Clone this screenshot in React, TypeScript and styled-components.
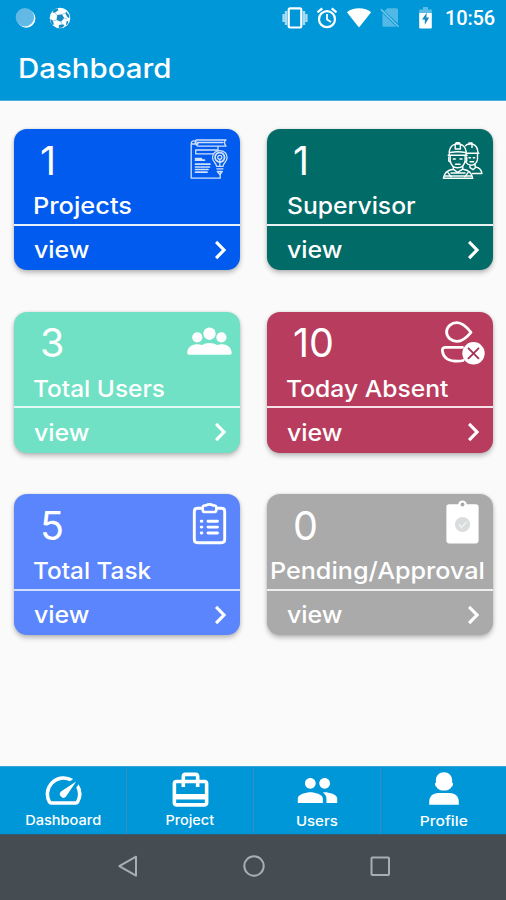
import React from "react";
import styled, { createGlobalStyle } from "styled-components";
import { MdOutlineSpeed, MdCardTravel, MdPeople } from "react-icons/md";

const GlobalStyle = createGlobalStyle`
  *, *::before, *::after { box-sizing: border-box; }
  body { margin: 0; background: #fafafa; font-family: Inter, "Liberation Sans", sans-serif; }
`;

const Screen = styled.div`
  width: 506px;
  height: 900px;
  display: flex;
  flex-direction: column;
  background: #fafafa;
  color: #fff;
  overflow: hidden;
  svg { display: block; flex: none; }
`;

const Header = styled.header`
  height: 101px;
  flex: none;
  background: #0097d9;
  border-bottom: 1px solid #48add9;
`;

const StatusBar = styled.div`
  height: 36px;
  display: flex;
  justify-content: space-between;
  padding: 0 11px 0 15px;
`;

const StatusGroup = styled.div<{ $gap: number }>`
  display: flex;
  align-items: center;
  gap: ${(p) => p.$gap}px;
`;

const Clock = styled.span`
  margin-left: 4px;
  font: 500 20px/36px Roboto, sans-serif;
  letter-spacing: -0.15px;
`;

const Stretch = styled.span<{ $x?: number }>`
  display: inline-block;
  white-space: nowrap;
  transform: scaleX(${(p) => p.$x ?? 1});
  transform-origin: 0 50%;
`;

const Title = styled.h1`
  margin: 0;
  padding-left: 17.5px;
  font-size: 27px;
  font-weight: 450;
  line-height: 66px;
`;

const Main = styled.main`
  flex: 1;
  display: grid;
  grid-template-columns: 226px 226px;
  grid-auto-rows: 141px;
  column-gap: 27px;
  row-gap: 41.5px;
  padding: 28px 13px 0 14px;
`;

const Card = styled.section<{ $bg: string }>`
  display: flex;
  flex-direction: column;
  border-radius: 13px;
  background: ${(p) => p.$bg};
  box-shadow: 0 3px 5px rgba(0, 0, 0, 0.24), 0 0 3px rgba(0, 0, 0, 0.12);
`;

const CardTop = styled.div<{ $line: string }>`
  height: 96.5px;
  border-bottom: 2px solid ${(p) => p.$line};
`;

const CountRow = styled.div`
  height: 62px;
  display: flex;
  justify-content: space-between;
  padding: 8px 8px 0 26px;
`;

const Count = styled.div`
  padding-top: 0.5px;
  font-size: 39.5px;
  font-weight: 400;
  line-height: 47px;
`;

const IconSlot = styled.div<{ $lift: number }>`
  width: 46px;
  height: 46px;
  margin-top: ${(p) => -p.$lift}px;
`;

const Label = styled.div<{ $indent: number }>`
  padding-left: ${(p) => p.$indent}px;
  font-size: 23.5px;
  font-weight: 450;
  line-height: 29px;
`;

const ViewRow = styled.div`
  flex: 1;
  display: flex;
  align-items: center;
  justify-content: space-between;
  padding: 4px 13.5px 0 20px;
  font-size: 23.5px;
  font-weight: 450;
`;

const TabBar = styled.nav`
  height: 68px;
  flex: none;
  display: grid;
  grid-template-columns: 127px 127px 127px 125px;
  background: #0097d9;
  border-top: 1px solid #38a5d4;
`;

const Tab = styled.div`
  display: flex;
  flex-direction: column;
  align-items: center;
  padding-top: 2px;
  border-right: 1px solid #3a8cbc;
  &:last-child { border-right: 0; }
`;

const TabIcon = styled.div`
  height: 43px;
`;

const TabLabel = styled.div<{ $x: number; $drop: number }>`
  padding-top: ${(p) => p.$drop}px;
  font-size: 13.5px;
  font-weight: 550;
  line-height: 16px;
  transform: scaleX(${(p) => p.$x});
`;

const SystemBar = styled.footer`
  height: 66px;
  flex: none;
  display: flex;
  justify-content: center;
  align-items: center;
  gap: 102px;
  padding: 0 0 3px 1px;
  background: #454d52;
  border-top: 1px solid #315b70;
`;

const line = { fill: "none", stroke: "currentColor", strokeLinecap: "round", strokeLinejoin: "round" } as const;

const MoonDot = () => (
  <svg width="22" height="22" viewBox="0 0 22 22">
    <circle cx="11.2" cy="11.5" r="9.200" fill="#fff" />
    <circle cx="9.900" cy="10.200" r="9.200" fill="#62b9e6" />
  </svg>
);

const Ball = () => (
  <svg width="22" height="22" viewBox="0 0 22 22">
    <circle cx="11" cy="11" r="10.300" fill="#fff" />
    <g fill="#168bc2">
      <path d="m8.200 8 4.700-.8 2.300 3.900-3.200 3.600-4.500-1.700z" />
      <path d="m4.500 2.800 4-1.600.9 2.100-3.600 2.500-2.400-.4zM17 4.600l3 3.400.4 3.200-2.100-1.100-1.900-3.600zM1.400 12l2.300 1.500 1.200 3.800-1 .9C2 16.200 1.200 14 1.400 12zM9.800 18l3.900-.7 1.800.9-1.800 2.400-3.800.4zM17.400 14.600l2-.8-.7 2.900-1.700 1.800z" />
    </g>
    <path d="m8.200 8-2.400-2.200M12.900 7.200l3.300-.7M15.200 11l3 1M12 14.700l1.200 2.700M7.500 13l-3.500.8" stroke="#7abfe1" strokeWidth=".7" />
  </svg>
);

const Vibrate = () => (
  <svg width="26" height="22" viewBox="0 0 26 22" {...line} strokeLinecap="butt">
    <rect x="6.700" y="1.300" width="12.600" height="19.200" rx="1.400" strokeWidth="2.200" />
    <path d="M4 4v14M22 4v14" strokeWidth="2.400" opacity=".65" />
    <path d="M1.600 7v8M24.400 7v8" strokeWidth="2.400" opacity=".65" />
  </svg>
);

const Alarm = () => (
  <svg width="22" height="22" viewBox="0 0 22 22" {...line} strokeLinecap="butt">
    <circle cx="11" cy="12.200" r="8" strokeWidth="2.200" />
    <path d="M11 7v5.400l4 2.700" strokeWidth="1.800" />
    <path d="m1.500 5.300 4.800-4M20.500 5.300l-4.800-4" strokeWidth="2.300" />
  </svg>
);

const Wifi = () => (
  <svg width="26" height="22" viewBox="0 0 26 22">
    <path d="M13 20.500.9 5.300C4 2.800 8 1.300 13 1.300s9 1.500 12.100 4z" fill="#fff" />
  </svg>
);

const NoSim = () => (
  <svg width="20" height="22" viewBox="0 0 20 22">
    <path d="M7.400 1.300h9.100q1.500 0 1.500 1.500v13.600L4.500 4.100zM2.400 6l14 13.800H4q-1.600 0-1.600-1.600z" fill="#fff" opacity=".32" />
    <path d="m1 2.400 17.600 17.400" stroke="#fff" strokeWidth="1.600" opacity=".45" />
  </svg>
);

const Battery = () => (
  <svg width="15" height="22" viewBox="0 0 15 22">
    <path d="M5 0h5v2.400h3.800V6H1.200V2.400H5z" fill="#fff" opacity=".35" />
    <path d="M1.200 6h12.600v14.300q0 1.200-1.200 1.200H2.400q-1.200 0-1.200-1.200z" fill="#fff" />
    <path d="M8.700 5.800 4 12.500h2.800v5.200l4.400-7.200H8.400z" fill="#168bc2" />
  </svg>
);

const ProjectIcon = () => (
  <svg width="46" height="46" viewBox="0 0 46 46" {...line} strokeWidth="1.300" opacity=".82">
    <path d="M10 5.400C6.500 3.800 5.200 6 5.200 8v34.200h29V37M5.200 8H12M10 4h30q-3 1.700 0 6.200H11.800Q7.900 7.600 10 4zM11 6.500h26M32 10.500V14H9.700v3.800h17.600M9.700 14v3.800M32 10.500v4" />
    <path d="M9.500 22.500h6M9.500 24.200h9" strokeWidth="1.700" />
    <path d="M9.500 28.200h15M9.500 31h14M9.500 33.500h12.500M9.500 36.200h11.500" strokeWidth="1.700" strokeDasharray="4 1.200" />
    <path d="M30.500 30.300c0-3.500-4-4.300-4-8.800 0-4.200 3.200-6.800 7.300-6.800s7.300 2.600 7.300 6.800c0 4.500-4 5.300-4 8.800zM30.800 32.800H37M31.300 35.500h5l-2.400 3z" />
    <circle cx="33.800" cy="21.300" r="4.700" strokeWidth="1.800" strokeDasharray="2 1" />
    <circle cx="33.800" cy="21.300" r="2" />
    <path d="M33.800 23.500v6" />
  </svg>
);

const WorkersIcon = () => (
  <svg width="46" height="46" viewBox="0 0 46 46" {...line} strokeWidth="1.400">
    <path d="M9.200 18.300h18.900M10.300 18v-3.800q1.100-5.800 6-7.100h4.800q5 1.400 6 7.100V18M16.300 7.100l1-1.400h3l.9 1.400M16.200 8v4h5.200V8M11 15.500q8-1.400 15.400 0M11.200 18.800v5q1.100 6.700 7.400 7 6.300-.3 7.500-7v-5" />
    <path d="M9.800 20v4.200l1.800 1M27.700 20v4.200l-1.800 1M14.300 22h2M21 22h2M16.500 27.200h4.600" />
    <path d="M14.400 29.700v2.500q-9 1.200-10 9h29.300q-1-7.800-9.900-9v-2.700M5.700 39h26.600M14 32.200l4.700 3.200 4.900-3.200M9 35.700l3 4M29 35.700l-3 4M12 36h14" />
    <path d="M26.500 8.800q1.200-1.300 3.200-1.800h3.600q5.300 1.600 5.800 9.200M27.500 16.300h12.300M30 7.500V6h3v4.400M38.500 17v5.300q-.9 4.600-5.300 5.800-4 .3-6-2.500M30 20.800h1.500M34.300 20.800h1.400M31 24.700h3.600M36.200 27.700v2.200q6 1 6.700 6.600h-9.400M31 28.400v2.300l3 2 2.400-2" />
  </svg>
);

const GroupIcon = () => (
  <svg width="46" height="46" viewBox="0 0 46 46" fill="#fff">
    <circle cx="23.500" cy="13.700" r="6.200" />
    <circle cx="11.300" cy="17.300" r="5.100" />
    <circle cx="35.400" cy="17.300" r="5.100" />
    <path d="M1.200 33c0-5.300 4.200-8.800 9.300-8.800 2 0 4 .2 5.400.9 2-1.500 4.800-2.200 7.600-2.200s5.700.7 7.600 2.200c1.400-.7 3.400-.9 5.400-.9 5 0 9.200 3.500 9.200 8.800q0 1.700-1.700 1.700H2.900Q1.200 34.700 1.200 33z" />
  </svg>
);

const AbsentIcon = () => (
  <svg width="46" height="46" viewBox="0 0 46 46" {...line}>
    <path d="M32 13.300C28.500 17.600 23.200 22.300 17.900 22.300c-5.500 0-10.300-4-10.300-9.300S12.400 3.700 17.900 3.700c5.300 0 10.500 5.200 14.100 9.600z" strokeWidth="2.800" />
    <path d="M23.500 28.400H6.200q-3.500 0-2.700 4.200 1.400 9.600 15.100 9.600 3.100 0 5.600-.7" strokeWidth="2.800" />
    <circle cx="34.500" cy="34.300" r="11.200" fill="#fff" stroke="none" />
    <path d="m29.500 29.300 10 10m0-10-10 10" stroke="#a73458" strokeWidth="1.900" />
  </svg>
);

const TaskIcon = () => (
  <svg width="46" height="46" viewBox="0 0 46 46" {...line}>
    <path d="M16.500 7.200h-5q-3.200 0-3.200 3.200v28.200q0 3.200 3.200 3.200h24q3.200 0 3.200-3.200V10.400q0-3.200-3.200-3.200h-5" strokeWidth="2.900" />
    <path d="M19.800 4.500q3.700-2.300 7.400 0h1.500q1.700.2 1.700 3.200T28.700 11H18.300q-1.700-.3-1.700-3.300t1.700-3.200z" strokeWidth="2.700" />
    <path d="M22 20.200h9.500M22 26.100h9.500M22 32h9.500M15.200 20.200h.7M15.200 26.100h.7M15.200 32h.7" strokeWidth="2.900" />
  </svg>
);

const ApprovalIcon = () => (
  <svg width="46" height="46" viewBox="0 0 46 46" overflow="visible">
    <path d="M10.200 3.300h9C19.500 1 21.300-.5 23.500-.5s4 1.500 4.300 3.800h9q2.800 0 2.800 2.800v33.500q0 2.800-2.800 2.800H10.200q-2.800 0-2.800-2.800V6.100q0-2.800 2.800-2.800z" fill="#fff" />
    <circle cx="23.500" cy="3.500" r="1.900" fill="#aaa" />
    <circle cx="23.500" cy="23.500" r="7.600" fill="#dadddd" />
    <path d="m20 23.700 2.500 2.600 5-5" fill="none" stroke="#f1f3f3" strokeWidth="1.500" />
  </svg>
);

const ProfileIcon = () => (
  <svg width="32" height="43" viewBox="0 0 32 43" fill="#fff">
    <path d="M16 3.200c4.600 0 8.100 3.400 8.100 8v2.200q1.300.5.800 2.300-.4 1.800-1.300 2.100c-1 2.200-3.200 3.300-5.100 3.600h-5c-1.900-.3-4.100-1.400-5.100-3.600q-.9-.3-1.300-2.100-.5-1.800.8-2.300v-2.200c0-4.600 3.500-8 8.100-8z" />
    <path d="M1.200 35.700v-3c0-5.300 3.500-8.800 9-8.800h11.600c5.500 0 9 3.500 9 8.800v3z" />
  </svg>
);

const Chevron = () => (
  <svg width="12" height="20" viewBox="0 0 12 20" {...line} strokeWidth="3.200" strokeLinecap="square" strokeLinejoin="miter">
    <path d="m2.200 3 6.800 7-6.800 7" />
  </svg>
);

type CardData = {
  count: string; label: string; stretch: number; indent: number; lift: number; bg: string; rule: string; Icon: React.FC;
};

const cards: CardData[] = [
  { count: "1", label: "Projects", stretch: 1.08, indent: 19, lift: 1, bg: "#005bee", rule: "#e6f0ff", Icon: ProjectIcon },
  { count: "1", label: "Supervisor", stretch: 1.05, indent: 19.5, lift: 0, bg: "#016b68", rule: "#e6f3f2", Icon: WorkersIcon },
  { count: "3", label: "Total Users", stretch: 1.04, indent: 19, lift: -0.5, bg: "#70e1c5", rule: "#e0faf4", Icon: GroupIcon },
  { count: "10", label: "Today Absent", stretch: 1.05, indent: 19, lift: 0.7, bg: "#b83c5d", rule: "#f6dfe6", Icon: AbsentIcon },
  { count: "5", label: "Total Task", stretch: 1.035, indent: 19, lift: 0.7, bg: "#5a85fc", rule: "#d3dfff", Icon: TaskIcon },
  { count: "0", label: "Pending/Approval", stretch: 1.07, indent: 3, lift: 1, bg: "#aaaaaa", rule: "#eeeeee", Icon: ApprovalIcon },
];

const tabs = [
  { label: "Dashboard", stretch: 1.08, drop: 0, icon: <MdOutlineSpeed size={43} /> },
  { label: "Project", stretch: 1.07, drop: 0, icon: <MdCardTravel size={43} /> },
  { label: "Users", stretch: 1.11, drop: 1, icon: <MdPeople size={43} /> },
  { label: "Profile", stretch: 1.15, drop: 1, icon: <ProfileIcon /> },
];

export default function App() {
  return (
    <Screen>
      <GlobalStyle />
      <Header>
        <StatusBar>
          <StatusGroup $gap={12}>
            <MoonDot />
            <Ball />
          </StatusGroup>
          <StatusGroup $gap={8}>
            <StatusGroup $gap={8}>
              <Vibrate />
              <Alarm />
              <Wifi />
              <NoSim />
            </StatusGroup>
            <StatusGroup $gap={10}>
              <span />
              <Battery />
            </StatusGroup>
            <Clock>10:56</Clock>
          </StatusGroup>
        </StatusBar>
        <Title><Stretch $x={1.09}>Dashboard</Stretch></Title>
      </Header>
      <Main>
        {cards.map(({ count, label, stretch, indent, lift, bg, rule, Icon }) => (
          <Card key={label} $bg={bg}>
            <CardTop $line={rule}>
              <CountRow>
                <Count>{count}</Count>
                <IconSlot $lift={lift}><Icon /></IconSlot>
              </CountRow>
              <Label $indent={indent}><Stretch $x={stretch}>{label}</Stretch></Label>
            </CardTop>
            <ViewRow>
              <Stretch $x={1.06}>view</Stretch>
              <Chevron />
            </ViewRow>
          </Card>
        ))}
      </Main>
      <TabBar>
        {tabs.map(({ label, stretch, drop, icon }) => (
          <Tab key={label}>
            <TabIcon>{icon}</TabIcon>
            <TabLabel $x={stretch} $drop={drop}>{label}</TabLabel>
          </Tab>
        ))}
      </TabBar>
      <SystemBar>
        <svg width="24" height="24" viewBox="0 0 24 24" fill="none" stroke="#a8afb2" strokeWidth="2" strokeLinejoin="round">
          <path d="M20 2.700v19L3.300 12.200z" />
        </svg>
        <svg width="24" height="24" viewBox="0 0 24 24" fill="none" stroke="#a8afb2" strokeWidth="2">
          <circle cx="12" cy="12" r="9.700" />
        </svg>
        <svg width="24" height="24" viewBox="0 0 24 24" fill="none" stroke="#a8afb2" strokeWidth="2">
          <rect x="3.500" y="3.500" width="17.500" height="17.500" rx="1" />
        </svg>
      </SystemBar>
    </Screen>
  );
}
